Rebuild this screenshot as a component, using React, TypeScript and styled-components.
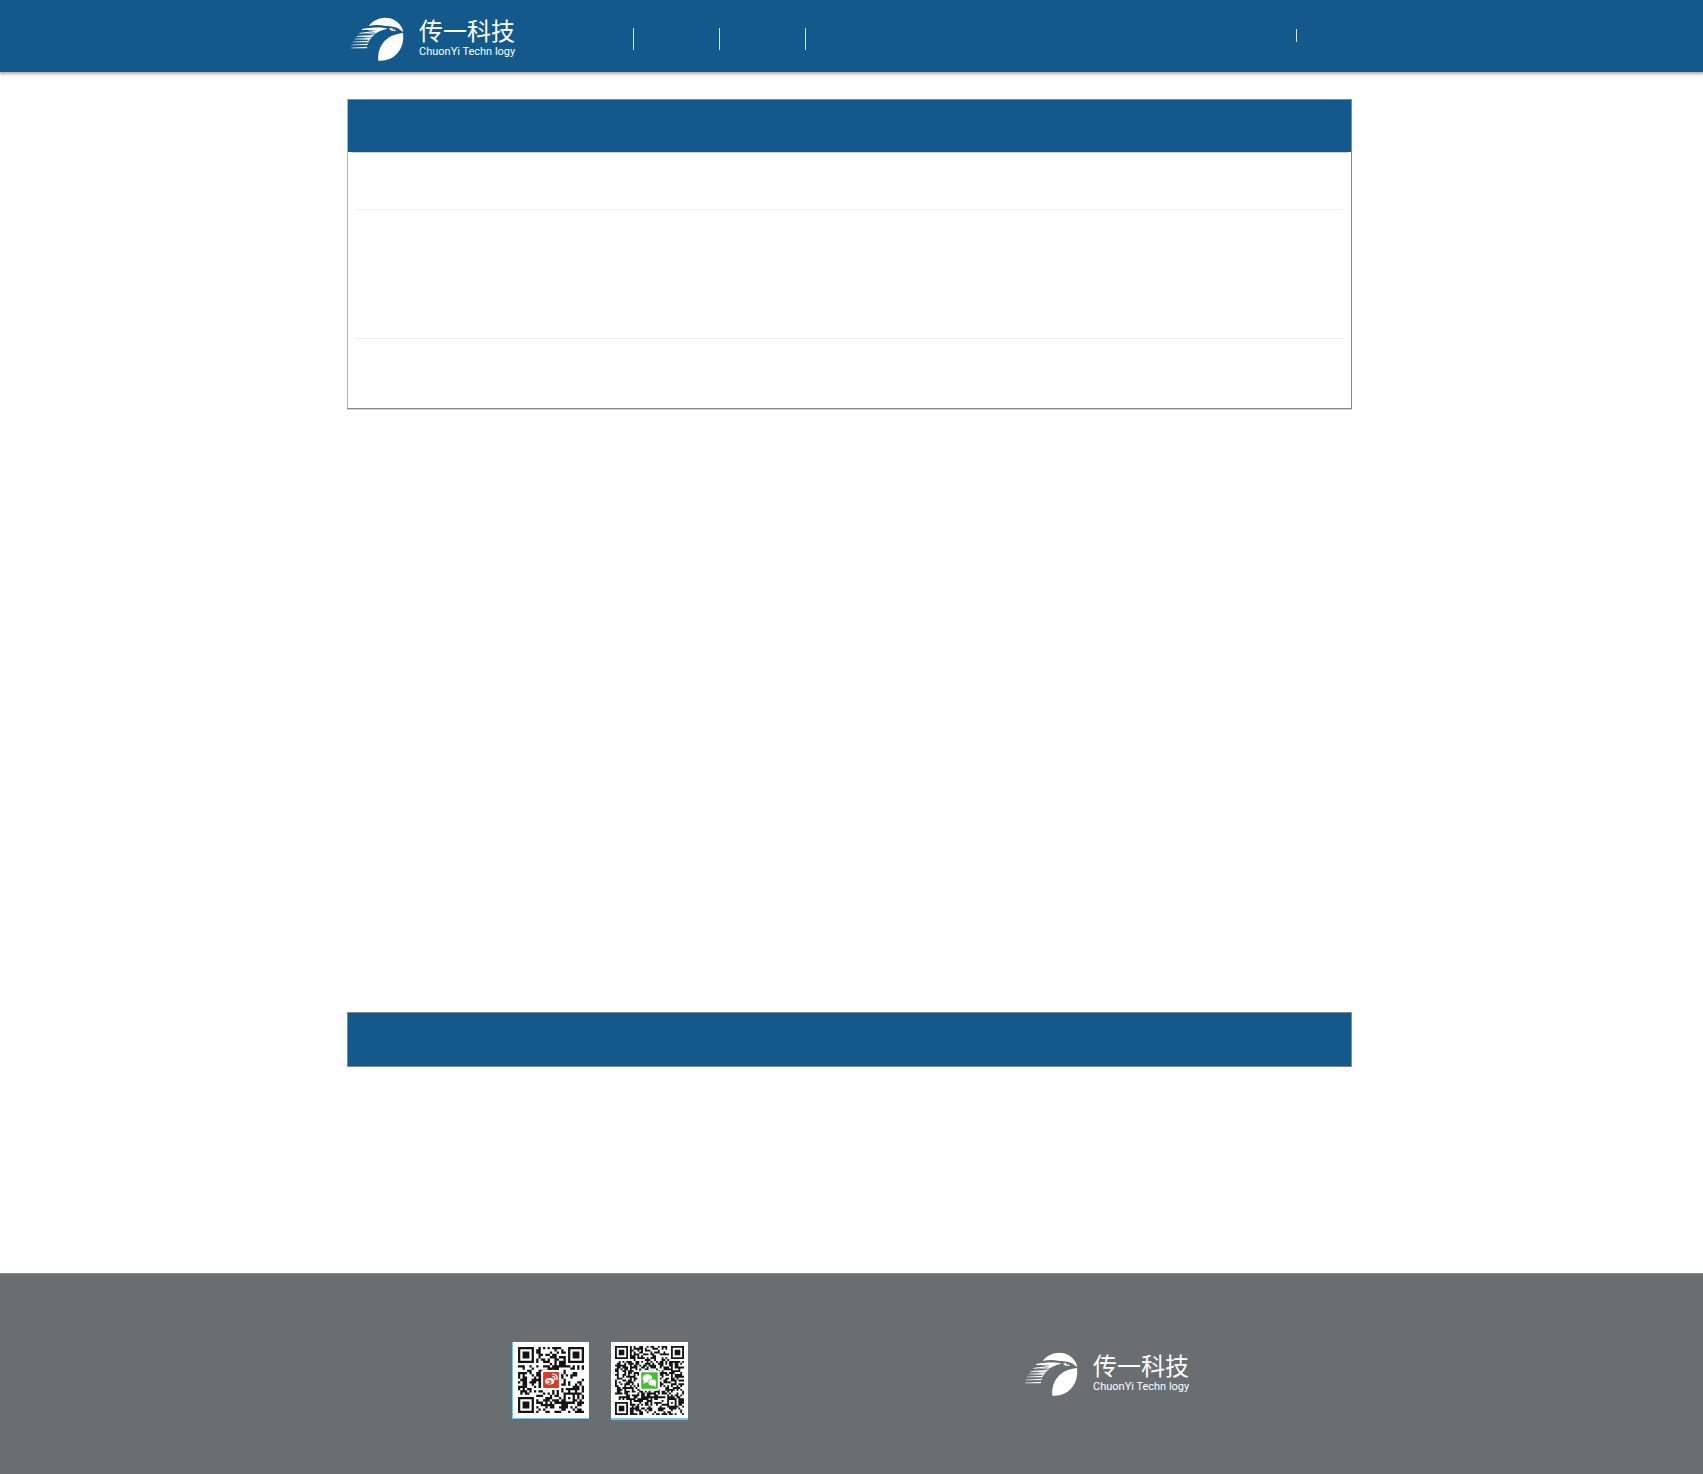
import React from "react";
import styled, { createGlobalStyle } from "styled-components";

const blue = "#14598b";
const grey = "#696e71";

const GlobalStyle = createGlobalStyle`
  *, *::before, *::after { box-sizing: border-box; }
  body {
    margin: 0;
    background: #fff;
    font-family: "Noto Sans", "Noto Sans CJK SC", sans-serif;
  }
`;

const Page = styled.div`
  display: flex;
  flex-direction: column;
  min-height: 100vh;
`;

const Header = styled.header`
  height: 72px;
  background: ${blue};
  box-shadow: 0 1px 3px 1px rgba(60, 40, 30, 0.4);
`;

const Container = styled.div`
  width: 100%;
  max-width: 1009px;
  margin: 0 auto;
`;

const HeaderBar = styled(Container)`
  display: flex;
  align-items: flex-start;
  padding: 0 4px;
`;

const Brand = styled.a`
  display: flex;
  align-items: flex-start;
  gap: 15px;
  width: 165px;
  padding-top: 17px;
  color: #fff;
  text-decoration: none;
`;

const BrandText = styled.span`
  display: flex;
  flex-direction: column;
  gap: 3px;
  white-space: nowrap;
`;

const BrandName = styled.span`
  font: 400 24px/26px "Noto Sans CJK SC", sans-serif;
`;

const BrandSub = styled.span`
  font: 400 11px/12px Roboto, "Liberation Sans", sans-serif;
`;

const Nav = styled.ul`
  display: flex;
  list-style: none;
  margin: 0 0 0 32px;
  padding: 28px 0 0;
`;

const NavItem = styled.li`
  width: 86px;
  height: 22px;
  border-right: 1px solid #dde7ee;
`;

const AccountDivider = styled.span`
  width: 1px;
  height: 13px;
  margin: 29px 55px 0 auto;
  background: #dde2e6;
`;

const Main = styled.main`
  flex: 1;
  padding: 27px 0 206px;
`;

const Stack = styled(Container)`
  display: flex;
  flex-direction: column;
  gap: 603px;
  padding-right: 4px;
`;

const Panel = styled.section`
  border: 1px solid #85898b;
`;

const DetailPanel = styled(Panel)`
  border-left-color: #b4b4b4;
  box-shadow: 0 1px 0 #d4d4d4;
`;

const PanelTitle = styled.div<{ $height: number }>`
  height: ${(p) => p.$height}px;
  background: ${blue};
`;

const PanelBody = styled.div`
  margin: 0 3px;
  padding: 0 5px;
  border-top: 1px solid #ccd3d8;
`;

const Row = styled.div<{ $height: number; $last?: boolean }>`
  height: ${(p) => p.$height}px;
  border-bottom: ${(p) => (p.$last ? "0" : "1px solid #edf0f1")};
`;

const Footer = styled.footer`
  height: 201px;
  background: ${grey};
  border-top: 1px solid #85898b;
`;

const FooterBar = styled(Container)`
  display: flex;
  align-items: flex-start;
  padding: 68px 166px 0 165px;
`;

const Codes = styled.div`
  display: flex;
  gap: 22px;
`;

const CodeFrame = styled.div<{ $side: number; $bottom: number }>`
  width: 77px;
  height: ${(p) => 76 + p.$bottom}px;
  background: #fff;
  border-left: ${(p) => p.$side}px solid #7cc5e6;
  border-bottom: ${(p) => p.$bottom}px solid #7cc5e6;
  padding: ${(p) => (p.$side ? "5px" : "4px")};

  svg {
    display: block;
    width: 100%;
    height: auto;
  }
`;

const FooterBrand = styled.div`
  margin-left: auto;

  ${Brand} {
    padding-top: 10px;
  }
`;

function Bird() {
  return (
    <svg width="53" height="44" viewBox="33 49 159 132" fill="#fff" aria-hidden="true">
      <path d="M86 76C103 53 138 44 163 58C180 68 188 82 190 94L181 88C169 77 151 77 137 76C119 72 102 72 86 76Z" />
      <path d="M66 86L112 82C124 81 134 82 143 84C128 86 117 91 108 98L94 112L82 130L84 121L88 113L50 106L94 105L97 101L58 97L102 95L105 92Z" fillOpacity="0.55" />
      <path d="M66 85C98 79 124 79 143 84C128 86 117 91 108 97L102 95L58 99V97L104 91L108 88L66 88Z" />
      <path d="M50 106L100 103L94 108L50 108ZM44 114L92 112L88 117L43 116ZM39 123L87 120L84 125L38 125ZM35 132L84 129L82 133L34 134ZM33 141L82 138L80 143L33 143Z" />
      <path d="M147 84C155 81 163 84 168 90C161 93 153 91 147 84Z" />
      <path d="M115 180C111 145 130 103 189 97C195 142 165 184 115 180Z" />
      <circle cx="160" cy="87" r="2" fill={blue} />
    </svg>
  );
}

function Logo() {
  return (
    <Brand href="#">
      <Bird />
      <BrandText>
        <BrandName>传一科技</BrandName>
        <BrandSub>ChuonYi Techn logy</BrandSub>
      </BrandText>
    </Brand>
  );
}

function finder(x: number, y: number, size: number) {
  const corners = [[0, 0], [size - 7, 0], [0, size - 7]];
  for (const [cx, cy] of corners) {
    const dx = x - cx;
    const dy = y - cy;
    if (dx >= -1 && dx <= 7 && dy >= -1 && dy <= 7) {
      const ring = Math.max(Math.abs(dx - 3), Math.abs(dy - 3));
      return ring === 3 || ring <= 1;
    }
  }
  const ring = Math.max(Math.abs(x - size + 7), Math.abs(y - size + 7));
  if (ring <= 2) return ring !== 1;
  return null;
}

function modules(size: number, seed: number) {
  let state = seed;
  let d = "";
  for (let y = 0; y < size; y++) {
    for (let x = 0; x < size; x++) {
      state = (Math.imul(state, 1664525) + 1013904223) >>> 0;
      const fixed = finder(x, y, size);
      if (fixed === null ? state / 4294967296 < 0.52 : fixed) {
        d += `M${x} ${y}h1v1h-1z`;
      }
    }
  }
  return d;
}

function QrCode({ size, seed, label, color, children }: {
  size: number;
  seed: number;
  label: string;
  color: string;
  children: React.ReactNode;
}) {
  return (
    <svg viewBox="0 0 100 100" role="img" aria-label={label}>
      <path d={modules(size, seed)} fill="#141414" transform={`scale(${100 / size})`} />
      <rect x="35" y="35" width="30" height="30" rx="3" fill="#fff" />
      <rect x="38" y="38" width="24" height="24" rx="1" fill={color} />
      {children}
    </svg>
  );
}

export default function App() {
  return (
    <Page>
      <GlobalStyle />
      <Header>
        <HeaderBar>
          <Logo />
          <Nav>
            <NavItem />
            <NavItem />
            <NavItem />
          </Nav>
          <AccountDivider />
        </HeaderBar>
      </Header>
      <Main>
        <Stack>
          <DetailPanel>
            <PanelTitle $height={52} />
            <PanelBody>
              <Row $height={57} />
              <Row $height={129} />
              <Row $height={69} $last />
            </PanelBody>
          </DetailPanel>
          <Panel>
            <PanelTitle $height={53} />
          </Panel>
        </Stack>
      </Main>
      <Footer>
        <FooterBar>
          <Codes>
            <CodeFrame $side={1} $bottom={1}>
              <QrCode size={29} seed={77} label="Weibo" color="#d63c2e">
                <ellipse cx="48" cy="52" rx="7" ry="5" fill="#fff" />
                <ellipse cx="47" cy="53" rx="4" ry="3" fill="#d63c2e" />
                <circle cx="46" cy="53" r="2" fill="#fff" />
                <path d="M52 45Q57 44 56 50M52 41Q61 41 59 50" fill="none" stroke="#fff" strokeWidth="2" />
              </QrCode>
            </CodeFrame>
            <CodeFrame $side={0} $bottom={2}>
              <QrCode size={37} seed={2024} label="WeChat" color="#45bd35">
                <ellipse cx="47" cy="47" rx="7" ry="6" fill="#fff" />
                <path d="M42 50L41 55L46 52Z" fill="#fff" />
                <ellipse cx="54" cy="53" rx="6" ry="5" fill="#fff" stroke="#45bd35" />
                <path d="M56 57L59 60L59 55Z" fill="#fff" />
              </QrCode>
            </CodeFrame>
          </Codes>
          <FooterBrand>
            <Logo />
          </FooterBrand>
        </FooterBar>
      </Footer>
    </Page>
  );
}
